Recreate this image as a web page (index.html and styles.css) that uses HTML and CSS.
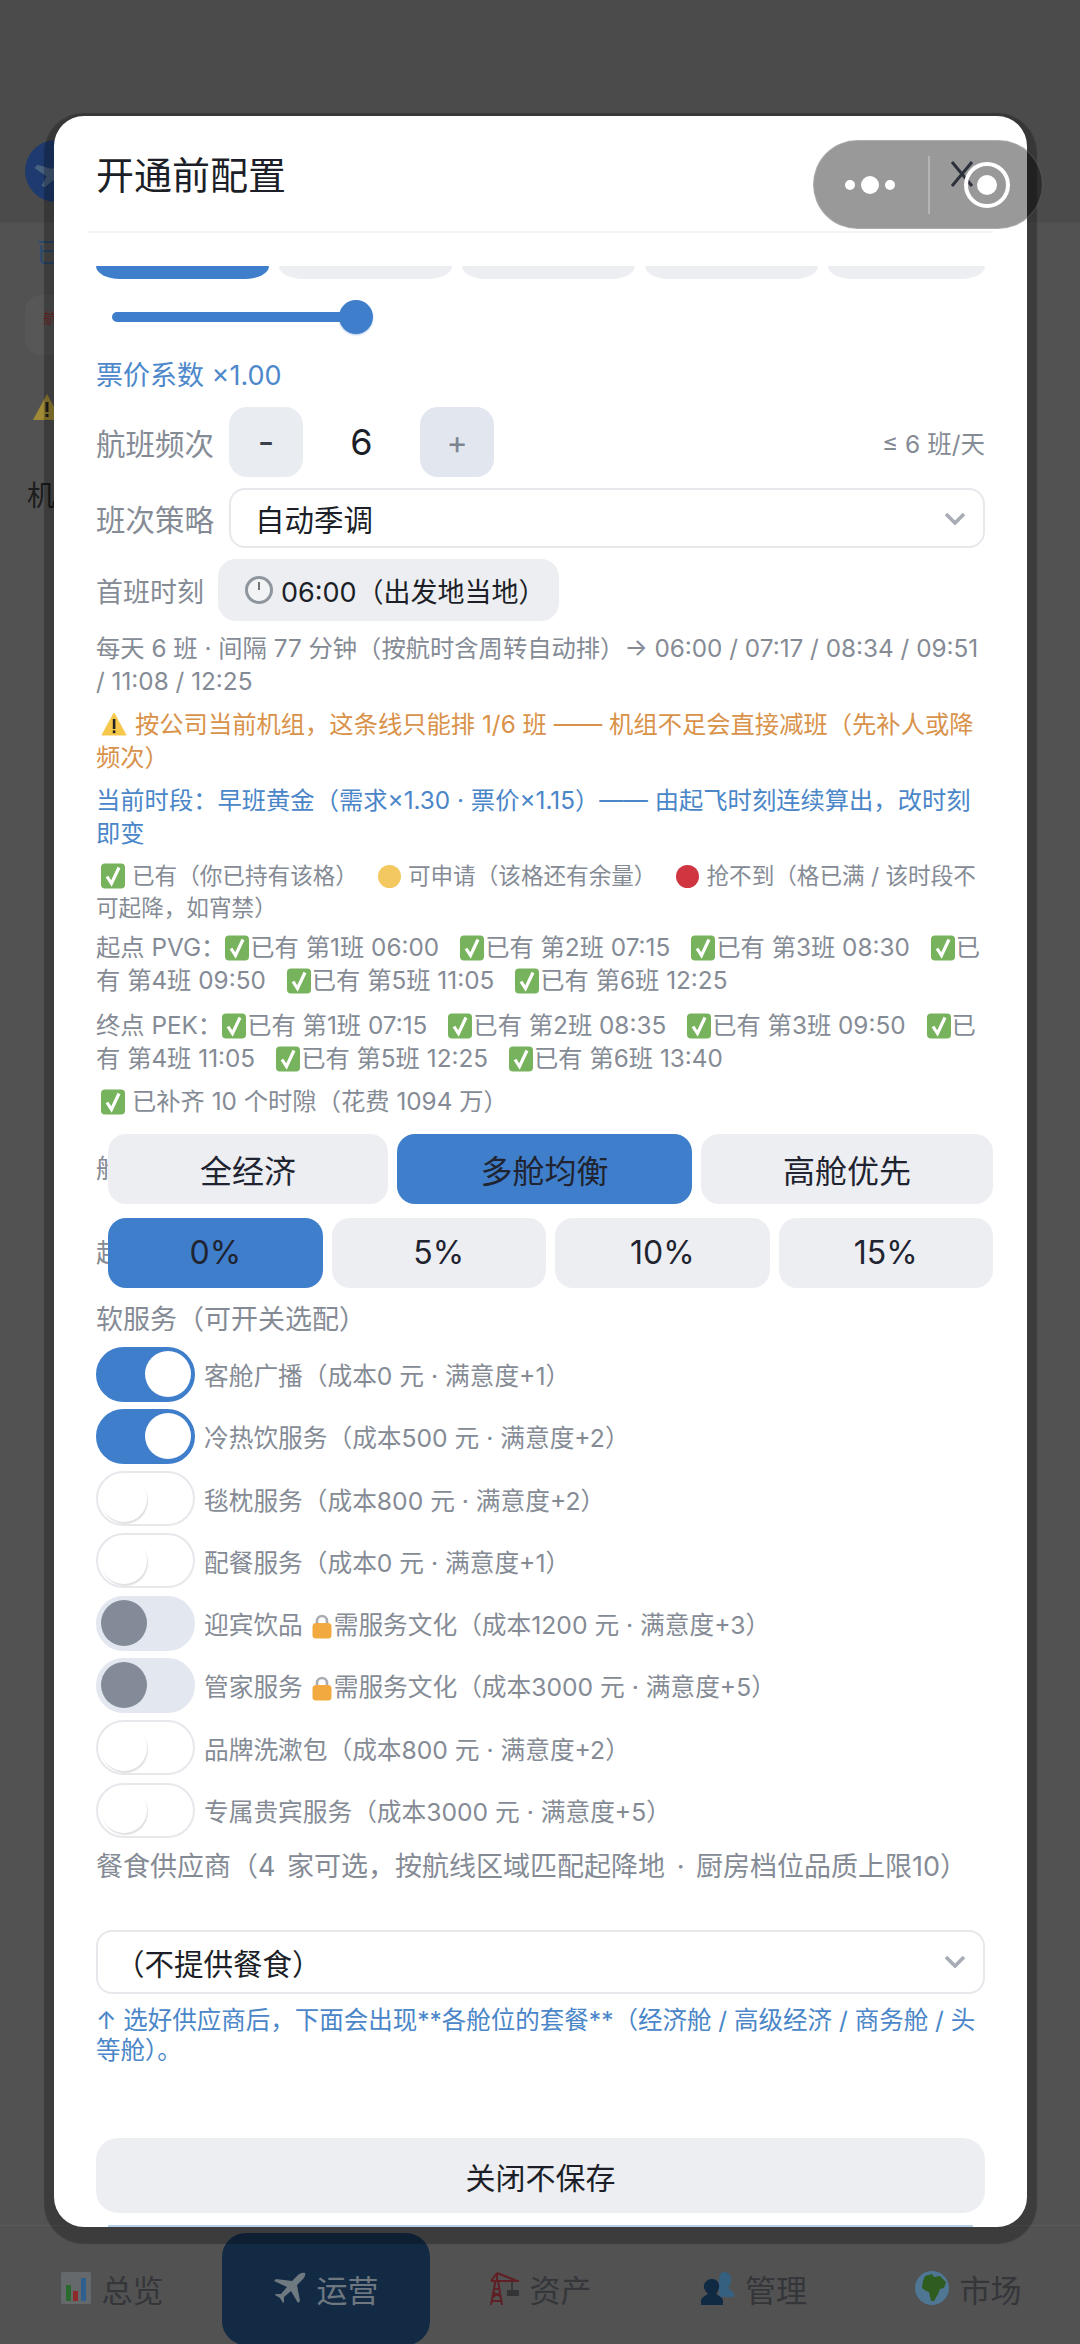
FILE: index.html
```html
<!DOCTYPE html>
<html lang="zh-CN">
<head>
    <meta charset="UTF-8">
    <meta name="viewport" content="width=device-width, initial-scale=1.0">
    <title>开通前配置</title>
    <link rel="stylesheet" href="styles.css">
</head>
<body>
    <svg class="defs" width="0" height="0">
        <symbol id="check" viewBox="0 0 24 26">
            <rect x="0" y="0.5" width="24" height="25" rx="4" fill="#77b25c"/>
            <path d="M6 13.5l4.5 7L18 4.5" fill="none" stroke="#fff" stroke-width="3.2"/>
        </symbol>
        <symbol id="lock" viewBox="0 0 20 26">
            <path d="M5 12V8a5 5 0 0 1 10 0v4" fill="none" stroke="#a9adb3" stroke-width="2.6"/>
            <rect x="0.5" y="10" width="19" height="15.5" rx="3.5" fill="#f2a93f"/>
        </symbol>
    </svg>

    <div class="page">
        <div class="topbar">
            <div class="avatar">
                <svg viewBox="0 0 60 60" width="62" height="62"><path d="M44 10L26 28 12 24l-3 3 12 8-5 9 3 2 8-7 9 11 3-2-5-15 16-18z" fill="#47617f"/></svg>
            </div>
        </div>
        <div class="under">
            <div class="under-title">已</div>
            <div class="under-card"><span>航</span></div>
            <svg class="under-warn" viewBox="0 0 30 28" width="30" height="28"><path d="M15 1l14 26H1z" fill="#a08a35"/><rect x="13.5" y="9" width="3" height="10" fill="#222"/><rect x="13.5" y="21" width="3" height="3" fill="#222"/></svg>
            <div class="under-name">机</div>
        </div>
        <div class="tabbar">
            <div class="tab-item">
                <svg viewBox="0 0 30 32" width="30" height="32"><rect width="30" height="32" rx="2" fill="#65696c"/><rect x="5" y="13" width="5" height="16" fill="#2a6a2e"/><rect x="12" y="19" width="5" height="10" fill="#8f2a2a"/><rect x="20" y="6" width="5" height="23" fill="#2f5f8f"/></svg>
                <span>总览</span>
            </div>
            <div class="tab-item active">
                <svg viewBox="0 0 32 32" width="32" height="32"><path d="M31 1C28 0 25 2 23 4l-5 5L2 7 0 9l13 6-6 7H2l-1 1 5 3 3 5 1-1v-5l7-6 7 12 2-2-3-16 5-5c2-2 4-5 3-7z" fill="#6f7a80"/></svg>
                <span>运营</span>
            </div>
            <div class="tab-item">
                <svg viewBox="0 0 30 33" width="30" height="33"><path d="M2 33L6.500 9M13 33L9 9M5 17h6M4 23h8M3 29h10M4 20l8 5M12 20l-8 5M2 9h28M8 1v8M8 1L2 9M8 1l20 8" fill="none" stroke="#5f1f24" stroke-width="2"/><path d="M23 9v9" stroke="#333" stroke-width="1.5"/><rect x="18" y="18" width="12" height="6" fill="#333436"/></svg>
                <span>资产</span>
            </div>
            <div class="tab-item">
                <svg viewBox="0 0 33 33" width="33" height="33"><path d="M23 0c5 0 8 4 7 10-1 3-2 5-3 6 2 2 5 3 6 5v4H18V9c0-5 1-9 5-9z" fill="#35607f"/><path d="M11 7c5 0 8 4 7 9-1 3-2 5-3 6 3 2 6 3 7 6v5H0v-5c1-3 4-4 7-6-1-1-3-3-4-6-1-5 3-9 8-9z" fill="#0f2a42"/></svg>
                <span>管理</span>
            </div>
            <div class="tab-item">
                <svg viewBox="0 0 34 34" width="34" height="34"><circle cx="17" cy="17" r="17" fill="#4f7794"/><path d="M10 5l7-2 2 3 6-1 6 6-2 6-4 1-2 5-4 7h-3l-2-9-3-1-4-3 1-7z" fill="#2f5d20"/></svg>
                <span>市场</span>
            </div>
        </div>
    </div>

    <div class="modal">
        <div class="modal-header">
            <div class="modal-title">开通前配置</div>
            <svg class="modal-close" viewBox="0 0 24 26" width="24" height="26"><path d="M2 1l20 24M22 1L2 25" fill="none" stroke="#4a5264" stroke-width="3"/></svg>
        </div>

        <div class="modal-body">
            <div class="preset-tabs">
                <div class="preset on"></div>
                <div class="preset"></div>
                <div class="preset"></div>
                <div class="preset"></div>
                <div class="preset last"></div>
            </div>

            <div class="slider"><div class="slider-thumb"></div></div>
            <div class="price-note">票价系数 ×1.00</div>

            <div class="row freq-row">
                <div class="row-label">航班频次</div>
                <div class="step-btn minus">-</div>
                <div class="step-value">6</div>
                <div class="step-btn plus">+</div>
                <div class="freq-limit">≤ 6 班/天</div>
            </div>

            <div class="row strategy-row">
                <div class="row-label">班次策略</div>
                <div class="select">
                    <span>自动季调</span>
                    <svg class="chevron" viewBox="0 0 22 13" width="22" height="13"><path d="M2 2l9 9 9-9" fill="none" stroke="#a8adb5" stroke-width="3.6"/></svg>
                </div>
            </div>

            <div class="row time-row">
                <div class="row-label small">首班时刻</div>
                <div class="time-btn">
                    <svg viewBox="0 0 28 28" width="28" height="28"><circle cx="14" cy="14" r="12.500" fill="#f2f3f4" stroke="#8f969e" stroke-width="3"/><path d="M14 6v8" stroke="#555" stroke-width="1.600"/></svg>
                    <span>06:00（出发地当地）</span>
                </div>
            </div>

            <p class="note schedule">每天 6 班 · 间隔 77 分钟（按航时含周转自动排）→ 06:00 / 07:17 / 08:34 / 09:51 / 11:08 / 12:25</p>
            <p class="note warn"><svg class="emoji wide" viewBox="0 0 26 24"><path d="M13 1l12 22H1z" fill="#f5c84c" stroke="#f5c84c" stroke-linejoin="round"/><rect x="11.800" y="7" width="2.600" height="10" fill="#222"/><rect x="11.800" y="18.400" width="2.600" height="2.800" fill="#222"/></svg>按公司当前机组，这条线只能排 1/6 班 —— 机组不足会直接减班（先补人或降频次）</p>
            <p class="note current">当前时段：早班黄金（需求×1.30 · 票价×1.15）—— 由起飞时刻连续算出，改时刻即变</p>

            <p class="note legend"><svg class="emoji lead"><use href="#check"/></svg>已有（你已持有该格）<span class="dot yellow"></span>可申请（该格还有余量）<span class="dot red"></span>抢不到（格已满 / 该时段不可起降，如宵禁）</p>

            <p class="note slots first">起点 PVG：<span class="slot"><svg class="emoji"><use href="#check"/></svg>已有 第1班 06:00</span><span class="slot"><svg class="emoji"><use href="#check"/></svg>已有 第2班 07:15</span><span class="slot"><svg class="emoji"><use href="#check"/></svg>已有 第3班 08:30</span><span class="slot"><svg class="emoji"><use href="#check"/></svg>已有 第4班 09:50</span><span class="slot"><svg class="emoji"><use href="#check"/></svg>已有 第5班 11:05</span><span class="slot"><svg class="emoji"><use href="#check"/></svg>已有 第6班 12:25</span></p>
            <p class="note slots">终点 PEK：<span class="slot"><svg class="emoji"><use href="#check"/></svg>已有 第1班 07:15</span><span class="slot"><svg class="emoji"><use href="#check"/></svg>已有 第2班 08:35</span><span class="slot"><svg class="emoji"><use href="#check"/></svg>已有 第3班 09:50</span><span class="slot"><svg class="emoji"><use href="#check"/></svg>已有 第4班 11:05</span><span class="slot"><svg class="emoji"><use href="#check"/></svg>已有 第5班 12:25</span><span class="slot"><svg class="emoji"><use href="#check"/></svg>已有 第6班 13:40</span></p>
            <p class="note filled"><svg class="emoji lead"><use href="#check"/></svg>已补齐 10 个时隙（花费 1094 万）</p>

            <div class="seg-row">
                <div class="seg-label">舱</div>
                <div class="seg-group cabin">
                    <div class="seg">全经济</div>
                    <div class="seg on">多舱均衡</div>
                    <div class="seg">高舱优先</div>
                </div>
            </div>
            <div class="seg-row second">
                <div class="seg-label">起</div>
                <div class="seg-group percent">
                    <div class="seg on">0%</div>
                    <div class="seg">5%</div>
                    <div class="seg">10%</div>
                    <div class="seg">15%</div>
                </div>
            </div>

            <div class="section-label">软服务（可开关选配）</div>
            <div class="services">
                <div class="service"><div class="toggle on"><i></i></div><span>客舱广播（成本0 元 · 满意度+1）</span></div>
                <div class="service"><div class="toggle on"><i></i></div><span>冷热饮服务（成本500 元 · 满意度+2）</span></div>
                <div class="service"><div class="toggle"><i></i></div><span>毯枕服务（成本800 元 · 满意度+2）</span></div>
                <div class="service"><div class="toggle"><i></i></div><span>配餐服务（成本0 元 · 满意度+1）</span></div>
                <div class="service"><div class="toggle locked"><i></i></div><span>迎宾饮品 <svg class="lock"><use href="#lock"/></svg>需服务文化（成本1200 元 · 满意度+3）</span></div>
                <div class="service"><div class="toggle locked"><i></i></div><span>管家服务 <svg class="lock"><use href="#lock"/></svg>需服务文化（成本3000 元 · 满意度+5）</span></div>
                <div class="service"><div class="toggle"><i></i></div><span>品牌洗漱包（成本800 元 · 满意度+2）</span></div>
                <div class="service"><div class="toggle"><i></i></div><span>专属贵宾服务（成本3000 元 · 满意度+5）</span></div>
            </div>

            <div class="section-label catering">餐食供应商（4 家可选，按航线区域匹配起降地 · 厨房档位品质上限10）</div>
            <div class="select catering-select">
                <span>（不提供餐食）</span>
                <svg class="chevron" viewBox="0 0 22 13" width="22" height="13"><path d="M2 2l9 9 9-9" fill="none" stroke="#a8adb5" stroke-width="3.600"/></svg>
            </div>
            <p class="note hint">↑ 选好供应商后，下面会出现**各舱位的套餐**（经济舱 / 高级经济 / 商务舱 / 头等舱）。</p>
        </div>

        <div class="modal-footer">
            <div class="btn-close">关闭不保存</div>
            <div class="btn-save"></div>
        </div>
    </div>

    <div class="capsule">
        <div class="capsule-dots"><i></i><i class="big"></i><i></i></div>
        <div class="capsule-line"></div>
        <div class="capsule-record"><i></i></div>
    </div>
</body>
</html>
```

FILE: styles.css
```css
* {
    margin: 0;
    padding: 0;
    box-sizing: border-box;
}

:root {
    --primary: #3f7ecb;
    --grey-text: #858b95;
    --dark-text: #1f2430;
    --soft-bg: #eceef2;
    --line: #e6e8ec;
}

html, body {
    width: 1080px;
    height: 2344px;
    overflow: hidden;
}

body {
    position: relative;
    background-color: #525252;
    font-family: Inter, "Noto Sans CJK SC", sans-serif;
    color: var(--dark-text);
}

.defs {
    position: absolute;
}

/* page behind the dialog, already dimmed */
.page {
    height: 2344px;
    display: flex;
    flex-direction: column;
}

.topbar {
    height: 223px;
    padding: 140px 0 0 25px;
    background-color: #4b4b4b;
    border-bottom: 1px solid #4f4f4f;
}

.avatar {
    width: 62px;
    height: 62px;
    border-radius: 50%;
    background-color: #1e3a6e;
    overflow: hidden;
}

.under {
    flex: 1;
    padding: 14px 0 0 25px;
}

.under-title {
    font-size: 28px;
    line-height: 32px;
    padding-left: 11px;
    color: #2c4a6e;
}

.under-card {
    width: 80px;
    height: 60px;
    margin-top: 26px;
    border-radius: 16px;
    background-color: #575757;
    padding: 12px 0 0 18px;
    font-size: 14px;
    color: #7a2b2b;
}

.under-warn {
    display: block;
    margin: 38px 0 0 7px;
}

.under-name {
    margin-top: 58px;
    padding-left: 2px;
    font-size: 28px;
    line-height: 34px;
    color: #1c1c1c;
}

.tabbar {
    height: 119px;
    padding: 7px 8px 0;
    display: flex;
    gap: 6px;
    border-top: 1px solid #5a5a5a;
    background-color: #525252;
}

.tab-item {
    flex: 1;
    height: 112px;
    padding-bottom: 2px;
    display: flex;
    align-items: center;
    justify-content: center;
    gap: 11px;
    border-radius: 24px;
    font-size: 31px;
    color: #34363a;
}

.tab-item.active {
    background-color: #132a45;
    color: #6f7880;
}

/* dialog */
.modal {
    position: absolute;
    top: 116px;
    left: 54px;
    width: 973px;
    height: 2111px;
    display: flex;
    flex-direction: column;
    overflow: hidden;
    border-radius: 30px;
    background-color: #fff;
    box-shadow: 0 7px 1px 10px rgba(0, 0, 0, 0.26);
}

.modal-header {
    height: 117px;
    margin: 0 34px;
    padding: 0 8px;
    flex-shrink: 0;
    display: flex;
    align-items: center;
    justify-content: space-between;
    border-bottom: 2px solid #f3f4f6;
}

.modal-title {
    font-size: 38px;
    line-height: 50px;
    margin-top: 2px;
    color: #1c1f27;
}

.modal-close {
    margin-right: 11px;
}

.modal-body {
    flex: 1;
    padding: 33px 42px 0;
    overflow: hidden;
}

.preset-tabs {
    display: flex;
    gap: 10px;
}

.preset {
    width: 173px;
    height: 13px;
    border-radius: 0 0 24px 24px / 0 0 13px 13px;
    background-color: var(--soft-bg);
}

.preset.on {
    background-color: var(--primary);
}

.preset.last {
    width: 157px;
}

.slider {
    position: relative;
    width: 244px;
    height: 10px;
    margin: 33px 0 0 16px;
    border-radius: 5px;
    background-color: var(--primary);
}

.slider-thumb {
    position: absolute;
    top: -12px;
    right: -17px;
    width: 34px;
    height: 34px;
    border-radius: 50%;
    background-color: var(--primary);
    box-shadow: 0 1px 2px rgba(63, 126, 203, 0.4);
}

.price-note {
    margin-top: 36px;
    font-size: 27px;
    line-height: 36px;
    color: #4d88cb;
}

.row {
    display: flex;
    align-items: center;
}

.row-label {
    width: 133px;
    flex-shrink: 0;
    font-size: 29.5px;
    color: var(--grey-text);
}

.row-label.small {
    width: 122px;
    font-size: 27px;
}

.freq-row {
    height: 70px;
    margin-top: 13px;
}

.step-btn {
    width: 74px;
    height: 70px;
    display: flex;
    align-items: center;
    justify-content: center;
    border-radius: 18px;
    background-color: #e9ecf0;
    font-size: 36px;
    color: #3a404c;
}

.step-btn.plus {
    background-color: #e2e6ee;
    font-size: 32px;
    color: #7d8593;
}

.step-value {
    width: 117px;
    text-align: center;
    font-size: 36px;
    color: #1c1f27;
}

.freq-limit {
    margin-left: auto;
    font-size: 24.5px;
    color: var(--grey-text);
}

.strategy-row {
    margin-top: 11px;
}

.select {
    flex: 1;
    height: 60px;
    padding: 0 17px 0 24px;
    display: flex;
    align-items: center;
    justify-content: space-between;
    border: 2px solid var(--line);
    border-radius: 16px;
    font-size: 29.5px;
    color: #1c1f27;
}

.time-row {
    margin-top: 11px;
}

.time-btn {
    height: 62px;
    padding: 0 13px 0 27px;
    display: flex;
    align-items: center;
    gap: 8px;
    border-radius: 18px;
    background-color: var(--soft-bg);
    font-size: 27px;
    color: #1c1f27;
}

.note {
    font-size: 24.3px;
    line-height: 32.5px;
    color: var(--grey-text);
}

.schedule {
    margin-top: 11px;
}

.warn {
    margin-top: 11px;
    color: #d9924a;
}

.current {
    margin-top: 11px;
    color: #4a86c8;
}

.legend {
    margin-top: 11px;
    font-size: 22.6px;
    line-height: 31.5px;
}

.slots {
    margin-top: 12px;
    line-height: 33px;
}

.slots.first {
    margin-top: 8px;
}

.filled {
    margin-top: 10px;
}

.emoji {
    width: 24px;
    height: 26px;
    vertical-align: -5px;
    margin-right: 1px;
}

.emoji.lead {
    margin: 0 7px 0 5px;
}

.emoji.wide {
    width: 26px;
    height: 24px;
    vertical-align: -3px;
    margin: 0 8px 0 5px;
}

.dot {
    display: inline-block;
    width: 23px;
    height: 23px;
    margin: 0 7px 0 20px;
    border-radius: 50%;
    vertical-align: -4px;
}

.dot.yellow {
    background-color: #f3c860;
}

.dot.red {
    background-color: #cf3640;
}

.slot {
    margin-right: 21px;
}

.seg-row {
    display: flex;
    margin: 16px -8px 0 0;
}

.seg-row.second {
    margin-top: 14px;
}

.seg-label {
    width: 12px;
    flex-shrink: 0;
    overflow: hidden;
    white-space: nowrap;
    font-size: 26px;
    line-height: 70px;
    color: var(--grey-text);
}

.seg-group {
    flex: 1;
    display: grid;
    gap: 9px;
}

.seg-group.cabin {
    grid-template-columns: 280fr 295fr 292fr;
}

.seg-group.percent {
    grid-template-columns: repeat(4, 1fr);
}

.seg {
    height: 70px;
    display: flex;
    align-items: center;
    justify-content: center;
    border-radius: 18px;
    background-color: var(--soft-bg);
    font-size: 32px;
    color: #1f2430;
}

.seg.on {
    background-color: var(--primary);
}

.section-label {
    margin-top: 16px;
    font-size: 27px;
    line-height: 32px;
    color: var(--grey-text);
}

.services {
    margin-top: 11px;
    display: flex;
    flex-direction: column;
    gap: 7.3px;
}

.service {
    display: flex;
    align-items: center;
    gap: 9px;
    font-size: 24.7px;
    color: var(--grey-text);
}

.toggle {
    width: 99px;
    height: 55px;
    padding: 3px;
    flex-shrink: 0;
    display: flex;
    align-items: center;
    border: 2px solid var(--line);
    border-radius: 28px;
    background-color: #fff;
}

.toggle i {
    display: block;
    width: 46px;
    height: 46px;
    border-radius: 50%;
    background-color: #fff;
    box-shadow: 1px 2px 1px rgba(0, 0, 0, 0.12);
}

.toggle.on {
    justify-content: flex-end;
    background-color: var(--primary);
    border-color: var(--primary);
    padding: 2px;
}

.toggle.on i {
    box-shadow: none;
}

.toggle.locked {
    background-color: #e3e7ef;
    border-color: #e3e7ef;
}

.toggle.locked i {
    background-color: #838a98;
    box-shadow: none;
}

.lock {
    width: 20px;
    height: 26px;
    margin: 0 2px 0 2px;
    vertical-align: -5px;
}

.section-label.catering {
    margin-top: 13px;
    word-spacing: 4px;
}

.catering-select {
    flex: none;
    height: 64px;
    margin-top: 47px;
    padding-left: 17px;
}

.hint {
    margin-top: 11px;
    font-size: 24.5px;
    line-height: 30px;
    color: #4a86c8;
}

.modal-footer {
    padding: 0 42px;
    flex-shrink: 0;
}

.btn-close {
    height: 75px;
    display: flex;
    align-items: center;
    justify-content: center;
    border-radius: 22px;
    background-color: var(--soft-bg);
    font-size: 30px;
    color: #1c1f27;
}

.btn-save {
    height: 2px;
    margin: 12px 12px 0;
    background-color: #b5cfe6;
}

/* mini program capsule lies over everything */
.capsule {
    position: absolute;
    top: 140px;
    left: 813px;
    width: 230px;
    height: 89px;
    display: flex;
    align-items: center;
    border: 1px solid rgba(255, 255, 255, 0.18);
    border-radius: 45px;
    background-color: rgba(0, 0, 0, 0.4);
}

.capsule-dots {
    width: 114px;
    padding-left: 31px;
    display: flex;
    align-items: center;
    gap: 6px;
}

.capsule-dots i {
    width: 10px;
    height: 10px;
    border-radius: 50%;
    background-color: #fff;
}

.capsule-dots i.big {
    width: 18px;
    height: 18px;
}

.capsule-line {
    width: 2px;
    height: 58px;
    background-color: rgba(255, 255, 255, 0.28);
}

.capsule-record {
    width: 46px;
    height: 46px;
    margin-left: 34px;
    display: flex;
    align-items: center;
    justify-content: center;
    border: 4px solid #fff;
    border-radius: 50%;
}

.capsule-record i {
    width: 20px;
    height: 20px;
    border-radius: 50%;
    background-color: #fff;
}
```
